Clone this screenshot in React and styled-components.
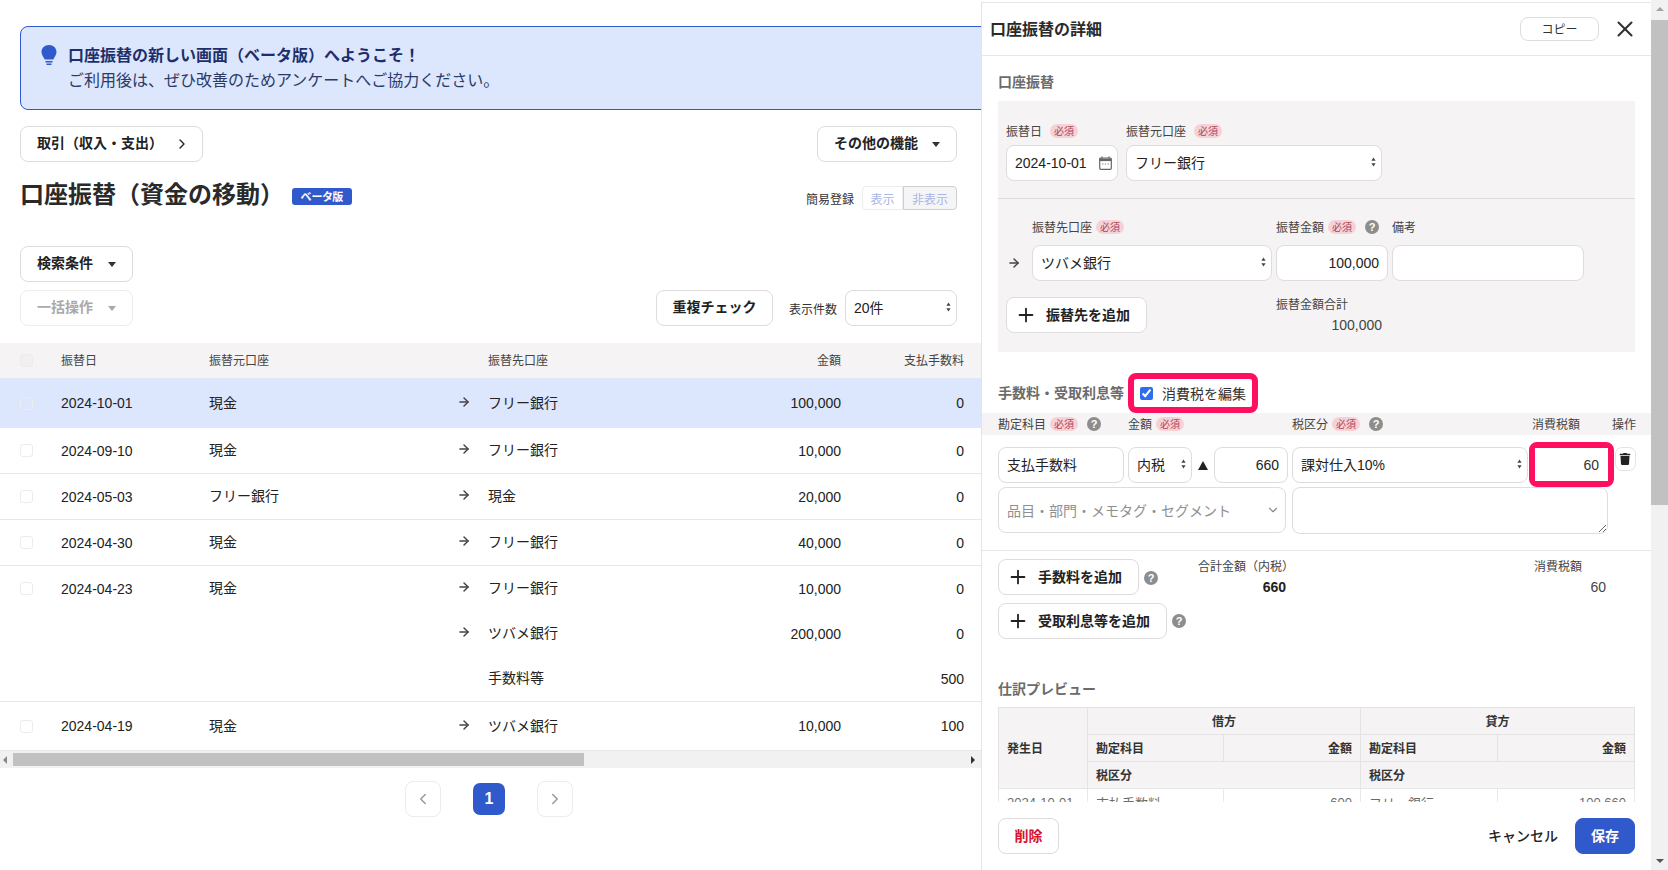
import styled, { createGlobalStyle } from 'styled-components';
import { ArrowRight, ChevronDown, ChevronLeft, ChevronRight, Plus, X } from 'lucide-react';
import { FaTrash } from 'react-icons/fa';

const GlobalStyle = createGlobalStyle`
html, body { margin: 0; padding: 0; background: #fff; }
body {
  font-family: "Liberation Sans", "Noto Sans CJK JP", sans-serif;
  font-size: 14px;
  color: #222;
  overflow: hidden;
}
* { box-sizing: border-box; }
`;

const Page = styled.div`
display: flex;
width: 1668px;
height: 870px;
overflow: hidden;
`;

const Main = styled.main`
width: 981px;
flex: none;
overflow: hidden;
padding-top: 26px;
`;

const Banner = styled.div`
display: flex;
gap: 11px;
width: 1000px;
height: 84px;
margin-left: 20px;
padding: 17px 20px;
background: #dce6fd;
border: 1px solid #3059cc;
border-radius: 8px;
`;

const BannerTitle = styled.div`
font-size: 16px;
line-height: 24px;
font-weight: 700;
color: #1c2f6b;
`;

const BannerText = styled.div`
margin-top: 1px;
font-size: 16px;
line-height: 24px;
color: #2b3a66;
`;

const Bar = styled.div`
display: flex;
align-items: center;
justify-content: space-between;
padding: 0 24px 0 20px;
margin-top: ${p => p.$top || 0}px;
`;

const Button = styled.button`
display: inline-flex;
align-items: center;
justify-content: ${p => p.$start ? 'flex-start' : p.$center ? 'center' : 'space-between'};
gap: 9px;
flex: none;
width: ${p => p.$w}px;
height: 36px;
padding: 0 ${p => p.$pad ?? 16}px ${p => p.$lift ?? 3}px;
font: 700 14px "Liberation Sans", "Noto Sans CJK JP", sans-serif;
white-space: nowrap;
color: ${p => p.$disabled ? '#a9a9a9' : '#222'};
background: #fff;
border: 1px solid ${p => p.$disabled ? '#ececec' : '#dedcdd'};
border-radius: 8px;
svg { margin-top: ${p => p.$lift ?? 3}px; }
`;

const Caret = styled.span`
display: inline-block;
width: 0;
height: 0;
margin-top: 5px;
border-left: 4px solid transparent;
border-right: 4px solid transparent;
border-top: 5px solid ${p => p.$disabled ? '#a9a9a9' : '#333'};
`;

const NextIcon = styled(ChevronRight)`
margin-right: -4px;
`;

const TitleRow = styled(Bar)`
height: 34px;
`;

const TitleGroup = styled.div`
display: flex;
align-items: center;
gap: 8px;
`;

const PageTitle = styled.h1`
margin: 0;
font-size: 24px;
line-height: 34px;
font-weight: 700;
color: #2a2a2a;
`;

const BetaBadge = styled.span`
display: inline-flex;
align-items: center;
justify-content: center;
width: 60px;
height: 17px;
margin-top: 2px;
background: #3059cc;
color: #fff;
font-size: 11px;
font-weight: 700;
border-radius: 3px;
font-feature-settings: "palt";
`;

const ToggleGroup = styled.div`
display: flex;
align-items: center;
margin-top: 6px;
font-size: 12px;
`;

const ToggleLabel = styled.span`
margin-right: 8px;
color: #333;
`;

const ToggleItem = styled.span`
display: flex;
align-items: center;
justify-content: center;
width: ${p => p.$w}px;
height: 24px;
color: #a9b6e4;
background: ${p => p.$on ? '#f5f5f7' : '#fff'};
border: 1px solid ${p => p.$on ? '#cfcfd2' : '#ececec'};
border-radius: ${p => p.$on ? '0 4px 4px 0' : '4px 0 0 4px'};
`;

const ToolGroup = styled.div`
display: flex;
align-items: center;
`;

const SmallLabel = styled.span`
font-size: 12px;
color: #333;
margin: 0 8px 0 16px;
`;

const SelectBox = styled.div`
display: flex;
align-items: center;
justify-content: space-between;
flex: none;
width: ${p => p.$w}px;
height: ${p => p.$h || 36}px;
padding: 0 5px ${p => p.$flat ? 0 : 2}px 8px;
font-size: 14px;
color: ${p => p.$muted ? '#8f8f8f' : '#222'};
background: #fff;
border: 1px solid #dedcdd;
border-radius: 8px;
white-space: nowrap;
`;

const TableWrap = styled.div`
margin-top: 17px;
`;

const Row = styled.div`
display: grid;
grid-template-columns: 61px 148px 248px 31px 200px 153px 123px 17px;
align-items: center;
height: ${p => p.$h}px;
background: ${p => p.$bg || '#fff'};
border-bottom: ${p => p.$line ? '1px solid #e8e7e8' : 'none'};
font-size: ${p => p.$head ? 12 : 14}px;
color: ${p => p.$head ? '#444' : '#222'};
`;

const Check = styled.span`
display: block;
width: 13px;
height: 13px;
margin-left: 20px;
border: 1px solid #ececec;
border-radius: 3px;
background: ${p => p.$head ? '#f1eff0' : 'transparent'};
`;

const JaCell = styled.div`
padding-bottom: 3px;
`;

const Num = styled.div`
text-align: right;
`;

const JaNum = styled(Num)`
padding-bottom: 3px;
`;

const ArrowCell = styled.div`
display: flex;
align-items: center;
padding-bottom: 3px;
color: #444;
`;

const HScroll = styled.div`
display: flex;
align-items: center;
justify-content: space-between;
height: 18px;
padding: 0 6px 0 3px;
background: #f1f1f1;
border-top: 1px solid #e8e8e8;
position: relative;
`;

const HThumb = styled.div`
position: absolute;
left: 13px;
top: 2px;
width: 571px;
height: 13px;
background: #c1c1c1;
`;

const Tri = styled.span`
width: 0;
height: 0;
border-top: 4px solid transparent;
border-bottom: 4px solid transparent;
${p => p.$dir === 'left' ? 'border-right: 4px solid #8a8a8a;' : 'border-left: 4px solid #333;'}
`;

const Pager = styled.div`
display: flex;
justify-content: center;
align-items: center;
gap: 32px;
width: 978px;
margin-top: 13px;
`;

const PageArrow = styled.div`
display: flex;
align-items: center;
justify-content: center;
width: 36px;
height: 36px;
color: #999;
border: 1px solid #ececec;
border-radius: 8px;
`;

const PageNum = styled.div`
display: flex;
align-items: center;
justify-content: center;
width: 32px;
height: 32px;
color: #fff;
font-size: 16px;
font-weight: 700;
background: #3059cc;
border-radius: 7px;
`;

const Panel = styled.aside`
position: relative;
display: flex;
flex-direction: column;
width: 670px;
flex: none;
height: 868px;
margin-top: 2px;
border-top: 1px solid #e6e6e6;
border-left: 1px solid #e4e4e4;
background: #fff;
`;

const PanelHead = styled.header`
display: flex;
align-items: center;
justify-content: space-between;
flex: none;
height: 53px;
padding: 0 13px 0 8px;
border-bottom: 1px solid #e6e6e6;
`;

const PanelTitle = styled.h2`
margin: 0;
padding-bottom: 3px;
font-size: 16px;
font-weight: 700;
color: #2a2a2a;
`;

const HeadActions = styled.div`
display: flex;
align-items: center;
gap: 13px;
`;

const CopyButton = styled.button`
width: 79px;
height: 24px;
padding: 0 0 2px;
font: 400 12px "Liberation Sans", "Noto Sans CJK JP", sans-serif;
color: #333;
background: #fff;
border: 1px solid #dedcdd;
border-radius: 8px;
`;

const PanelBody = styled.div`
flex: 1;
min-height: 0;
overflow: hidden;
padding: 16px 16px 0;
`;

const SectionTitle = styled.div`
font-size: 14px;
line-height: 20px;
font-weight: 700;
color: #6b6b6b;
margin-top: ${p => p.$top || 0}px;
white-space: nowrap;
`;

const GreyBox = styled.div`
margin-top: 9px;
height: 251px;
padding-top: 20px;
background: #f5f3f4;
`;

const FieldRow = styled.div`
display: flex;
align-items: flex-end;
gap: ${p => p.$gap ?? 8}px;
padding-left: 8px;
`;

const Field = styled.div`
display: flex;
flex-direction: column;
gap: ${p => p.$gap ?? 4}px;
flex: none;
width: ${p => p.$w}px;
margin-left: ${p => p.$left || 0}px;
`;

const LabelRow = styled.div`
display: flex;
align-items: center;
gap: ${p => p.$gap ?? 8}px;
height: 20px;
padding-bottom: 1px;
font-size: 12px;
color: #444;
white-space: nowrap;
`;

const Required = styled.span`
display: inline-flex;
align-items: center;
justify-content: center;
width: 28px;
height: 14px;
font-size: 10px;
color: #a8475c;
background: #f7d1d8;
border-radius: 7px;
`;

const Help = styled.span`
display: inline-flex;
align-items: center;
justify-content: center;
align-self: center;
flex: none;
width: 14px;
height: 14px;
margin-left: ${p => p.$left || 0}px;
font-size: 11px;
font-weight: 700;
color: #fff;
background: #8d8d8d;
border-radius: 50%;
`;

const Divider = styled.div`
height: 1px;
margin: 17px 0 18px;
background: #dcdadb;
`;

const TextInput = styled.input`
flex: none;
width: ${p => p.$w ? p.$w + 'px' : '100%'};
height: 36px;
padding: 0 8px ${p => p.$cjk ? 2 : 0}px;
font: 400 14px "Liberation Sans", "Noto Sans CJK JP", sans-serif;
color: #222;
text-align: ${p => p.$right ? 'right' : 'left'};
background: #fff;
border: 1px solid #dedcdd;
border-radius: 8px;
outline: none;
`;

const ArrowBox = styled.div`
display: flex;
align-items: center;
justify-content: center;
flex: none;
width: 16px;
height: 36px;
margin-right: 2px;
color: #444;
`;

const TotalRow = styled.div`
display: flex;
align-items: flex-start;
margin-top: 16px;
padding-left: 8px;
`;

const AddLabel = styled.span`
white-space: nowrap;
`;

const Summary = styled.div`
flex: none;
width: ${p => p.$w}px;
margin-left: ${p => p.$left}px;
font-size: 12px;
line-height: 16px;
white-space: nowrap;
color: #444;
`;

const SummaryValue = styled.div`
margin-top: 2px;
font-size: 14px;
line-height: 20px;
text-align: right;
color: ${p => p.$bold ? '#222' : '#444'};
font-weight: ${p => p.$bold ? 700 : 400};
`;

const FeeTitleRow = styled.div`
display: flex;
align-items: center;
gap: 4px;
height: 40px;
margin-top: 21px;
`;

const CheckFrame = styled.label`
display: flex;
align-items: center;
gap: 9px;
width: 130px;
height: 40px;
padding-left: 6px;
font-size: 14px;
color: #333;
white-space: nowrap;
border: 6px solid #fe0f5f;
border-radius: 8px;
`;

const BlueCheck = styled.input`
width: 13px;
height: 13px;
margin: 0;
accent-color: #2a6ff0;
`;

const ColumnHead = styled.div`
display: grid;
grid-template-columns: 130px 164px 240px 80px auto;
align-items: center;
height: 22px;
margin: 0 -16px;
padding-left: 16px;
background: #f5f3f4;
`;

const FeeRow = styled.div`
display: flex;
align-items: center;
gap: 4px;
margin-top: ${p => p.$top}px;
`;

const TriangleMark = styled.span`
flex: none;
width: 10px;
margin: 0 2px;
height: 0;
border-left: 5px solid transparent;
border-right: 5px solid transparent;
border-bottom: 9px solid #222;
`;

const HighlightFrame = styled.div`
flex: none;
width: 85px;
height: 45px;
margin: -5px -3px -4px -3px;
border: 6px solid #fe0f5f;
border-radius: 8px;
background: #fff;
`;

const BareInput = styled.input`
display: block;
width: 100%;
height: 100%;
padding: 0 9px 0 0;
font: 400 14px "Liberation Sans", "Noto Sans CJK JP", sans-serif;
color: #333;
text-align: right;
border: none;
outline: none;
`;

const TrashButton = styled.div`
display: flex;
align-items: center;
justify-content: center;
align-self: flex-start;
flex: none;
width: 21px;
height: 24px;
padding-right: 2px;
color: #222;
border: 1px solid #e4e4e4;
border-radius: 7px;
`;

const NoteRow = styled.div`
display: flex;
align-items: flex-start;
gap: 6px;
margin-top: 4px;
`;

const NoteArea = styled.textarea`
flex: none;
width: 316px;
height: 47px;
padding: 6px 8px;
background: #fff;
border: 1px solid #dedcdd;
border-radius: 8px;
outline: none;
`;

const FullLine = styled.div`
height: 1px;
margin: 16px -16px 8px;
background: #e6e6e6;
`;

const AddRow = styled.div`
display: flex;
align-items: flex-start;
margin-top: ${p => p.$top || 0}px;
`;

const Journal = styled.table`
width: 636px;
margin-top: 8px;
border-collapse: collapse;
table-layout: fixed;
font-size: 12px;
`;

const Th = styled.th`
height: 27px;
padding: 0 8px 2px;
font-weight: 700;
color: #333;
text-align: ${p => p.$align || 'left'};
background: #f5f3f4;
border: 1px solid #e4e2e3;
`;

const Td = styled.td`
height: 27px;
padding: 0 8px;
font-size: 13px;
color: #333;
text-align: ${p => p.$align || 'left'};
border: 1px solid #e4e2e3;
`;

const PanelFoot = styled.footer`
position: relative;
display: flex;
align-items: center;
justify-content: space-between;
flex: none;
height: 68px;
padding: 0 16px;
background: #fff;
&::before {
  content: '';
  position: absolute;
  left: 0;
  right: 0;
  bottom: 100%;
  height: 24px;
  background: linear-gradient(rgba(255, 255, 255, 0), rgba(255, 255, 255, 0.3));
}
`;

const DeleteButton = styled(Button)`
color: #d6112f;
`;

const FootActions = styled.div`
display: flex;
align-items: center;
gap: 17px;
`;

const CancelText = styled.span`
padding-bottom: 3px;
font-size: 14px;
font-weight: 500;
color: #222;
`;

const SaveButton = styled(Button)`
color: #fff;
background: #3059cc;
border-color: #3059cc;
`;

const VScroll = styled.div`
display: flex;
flex-direction: column;
align-items: center;
flex: none;
width: 17px;
height: 870px;
background: #f1f1f1;
`;

const VThumb = styled.div`
width: 100%;
height: 485px;
margin-top: 9px;
background: #c1c1c1;
`;

const UpTri = styled.span`
width: 0;
height: 0;
margin-top: 7px;
border-left: 4px solid transparent;
border-right: 4px solid transparent;
border-bottom: 4px solid #a3a3a3;
`;

const DownTri = styled.span`
width: 0;
height: 0;
margin-top: auto;
margin-bottom: 7px;
border-left: 4px solid transparent;
border-right: 4px solid transparent;
border-top: 4px solid #555;
`;

const UpDown = () => (
  <svg width="5" height="10" viewBox="0 0 5 10" style={{ flex: 'none' }}>
    <path d="M2.5 0.5L4.6 3.8H0.4Z M2.5 9.5L0.4 6.2H4.6Z" fill="#444" />
  </svg>
);

const Calendar = () => (
  <svg width="13" height="14" viewBox="0 0 13 14" style={{ flex: 'none' }}>
    <rect x="0.7" y="2" width="11.6" height="11.3" rx="1" fill="none" stroke="#666" strokeWidth="1.2" />
    <path d="M0.7 2.5h11.6v2.6H0.7Z" fill="#666" />
    <path d="M3 0.5v2M10 0.5v2" stroke="#666" strokeWidth="1.2" />
    <path d="M3 8h1.4M5.8 8h1.4M8.6 8h1.4" stroke="#888" strokeWidth="1.2" />
  </svg>
);

const Bulb = () => (
  <svg width="16" height="20" viewBox="0 0 16 20" style={{ flex: 'none', marginTop: 1 }}>
    <path d="M8 0C3.6 0 0.5 3 0.5 6.9c0 3.1 2.2 4.7 3.2 7.6h8.6c1-2.9 3.2-4.5 3.2-7.6C15.5 3 12.4 0 8 0Z" fill="#3059cc" />
    <path d="M4.5 16h7v1.6h-7ZM5.5 18.4h5V20h-5Z" fill="#3059cc" />
  </svg>
);

const rows = [
  { h: 50, bg: '#dce6fd', date: '2024-10-01', from: '現金', to: 'フリー銀行', amount: '100,000', fee: '0' },
  { h: 46, line: true, date: '2024-09-10', from: '現金', to: 'フリー銀行', amount: '10,000', fee: '0' },
  { h: 46, line: true, date: '2024-05-03', from: 'フリー銀行', to: '現金', amount: '20,000', fee: '0' },
  { h: 46, line: true, date: '2024-04-30', from: '現金', to: 'フリー銀行', amount: '40,000', fee: '0' },
  { h: 45, date: '2024-04-23', from: '現金', to: 'フリー銀行', amount: '10,000', fee: '0' },
  { h: 45, sub: true, to: 'ツバメ銀行', amount: '200,000', fee: '0' },
  { h: 46, line: true, sub: true, noArrow: true, to: '手数料等', fee: '500' },
  { h: 48, date: '2024-04-19', from: '現金', to: 'ツバメ銀行', amount: '10,000', fee: '100' },
];

export default function App() {
  return (
    <Page>
      <GlobalStyle />
      <Main>
        <Banner>
          <Bulb />
          <div>
            <BannerTitle>口座振替の新しい画面（ベータ版）へようこそ！</BannerTitle>
            <BannerText>ご利用後は、ぜひ改善のためアンケートへご協力ください。</BannerText>
          </div>
        </Banner>

        <Bar $top={16}>
          <Button $w={183} $lift={5}>取引（収入・支出）<NextIcon size={16} strokeWidth={2} /></Button>
          <Button $w={140} $lift={5}>その他の機能<Caret /></Button>
        </Bar>

        <TitleRow $top={16}>
          <TitleGroup>
            <PageTitle>口座振替（資金の移動）</PageTitle>
            <BetaBadge>ベータ版</BetaBadge>
          </TitleGroup>
          <ToggleGroup>
            <ToggleLabel>簡易登録</ToggleLabel>
            <ToggleItem $w={41}>表示</ToggleItem>
            <ToggleItem $w={54} $on>非表示</ToggleItem>
          </ToggleGroup>
        </TitleRow>

        <Bar $top={34}>
          <Button $w={113} $lift={5}>検索条件<Caret /></Button>
        </Bar>
        <Bar $top={8}>
          <Button $w={113} $lift={5} $disabled>一括操作<Caret $disabled /></Button>
          <ToolGroup>
            <Button $w={117} $center $lift={5}>重複チェック</Button>
            <SmallLabel>表示件数</SmallLabel>
            <SelectBox $w={112}>20件<UpDown /></SelectBox>
          </ToolGroup>
        </Bar>

        <TableWrap>
          <Row $h={35} $head $bg="#f5f3f4">
            <Check $head />
            <JaCell>振替日</JaCell>
            <JaCell>振替元口座</JaCell>
            <div />
            <JaCell>振替先口座</JaCell>
            <JaNum>金額</JaNum>
            <JaNum>支払手数料</JaNum>
          </Row>
          {rows.map((r, i) => (
            <Row key={i} $h={r.h} $bg={r.bg} $line={r.line}>
              {r.sub ? <div /> : <Check />}
              <div>{r.date}</div>
              <JaCell>{r.from}</JaCell>
              <ArrowCell>{!r.noArrow && <ArrowRight size={14} strokeWidth={2.5} />}</ArrowCell>
              <JaCell>{r.to}</JaCell>
              <Num>{r.amount}</Num>
              <Num>{r.fee}</Num>
            </Row>
          ))}
          <HScroll>
            <Tri $dir="left" />
            <HThumb />
            <Tri $dir="right" />
          </HScroll>
        </TableWrap>

        <Pager>
          <PageArrow><ChevronLeft size={18} /></PageArrow>
          <PageNum>1</PageNum>
          <PageArrow><ChevronRight size={18} /></PageArrow>
        </Pager>
      </Main>

      <Panel>
        <PanelHead>
          <PanelTitle>口座振替の詳細</PanelTitle>
          <HeadActions>
            <CopyButton>コピー</CopyButton>
            <X size={26} strokeWidth={1.9} color="#333" />
          </HeadActions>
        </PanelHead>

        <PanelBody>
          <SectionTitle>口座振替</SectionTitle>
          <GreyBox>
            <FieldRow>
              <Field $w={112}>
                <LabelRow>振替日<Required>必須</Required></LabelRow>
                <SelectBox $w={112} $flat>2024-10-01<Calendar /></SelectBox>
              </Field>
              <Field $w={256}>
                <LabelRow>振替元口座<Required>必須</Required></LabelRow>
                <SelectBox $w={256}>フリー銀行<UpDown /></SelectBox>
              </Field>
            </FieldRow>
            <Divider />
            <FieldRow $gap={4}>
              <ArrowBox><ArrowRight size={14} strokeWidth={2.5} /></ArrowBox>
              <Field $w={240} $gap={8} $left={4}>
                <LabelRow $gap={4}>振替先口座<Required>必須</Required></LabelRow>
                <SelectBox $w={240}>ツバメ銀行<UpDown /></SelectBox>
              </Field>
              <Field $w={112} $gap={8}>
                <LabelRow $gap={4}>振替金額<Required>必須</Required><Help $left={5}>?</Help></LabelRow>
                <TextInput $right readOnly value="100,000" />
              </Field>
              <Field $w={192} $gap={8}>
                <LabelRow>備考</LabelRow>
                <TextInput readOnly value="" />
              </Field>
            </FieldRow>
            <TotalRow>
              <Button $w={141} $start $pad={8}><Plus size={22} strokeWidth={2} /><AddLabel>振替先を追加</AddLabel></Button>
              <Summary $w={106} $left={129}>
                振替金額合計
                <SummaryValue>100,000</SummaryValue>
              </Summary>
            </TotalRow>
          </GreyBox>

          <FeeTitleRow>
            <SectionTitle>手数料・受取利息等</SectionTitle>
            <CheckFrame><BlueCheck type="checkbox" defaultChecked />消費税を編集</CheckFrame>
          </FeeTitleRow>
          <ColumnHead>
            <LabelRow $gap={4}>勘定科目<Required>必須</Required><Help $left={5}>?</Help></LabelRow>
            <LabelRow $gap={4}>金額<Required>必須</Required></LabelRow>
            <LabelRow $gap={4}>税区分<Required>必須</Required><Help $left={5}>?</Help></LabelRow>
            <LabelRow>消費税額</LabelRow>
            <LabelRow>操作</LabelRow>
          </ColumnHead>

          <FeeRow $top={12}>
            <TextInput $w={126} $cjk readOnly value="支払手数料" />
            <SelectBox $w={64}>内税<UpDown /></SelectBox>
            <TriangleMark />
            <TextInput $w={74} $right readOnly value="660" />
            <SelectBox $w={236}>課対仕入10%<UpDown /></SelectBox>
            <HighlightFrame><BareInput readOnly value="60" /></HighlightFrame>
            <TrashButton><FaTrash size={12} /></TrashButton>
          </FeeRow>
          <NoteRow>
            <SelectBox $w={288} $h={46} $muted $flat>
              品目・部門・メモタグ・セグメント
              <ChevronDown size={14} color="#888" />
            </SelectBox>
            <NoteArea readOnly />
          </NoteRow>
          <FullLine />

          <AddRow>
            <Button $w={141} $start $pad={8}><Plus size={22} strokeWidth={2} /><AddLabel>手数料を追加</AddLabel></Button>
            <Help $left={5}>?</Help>
            <Summary $w={88} $left={40}>
              合計金額（内税）
              <SummaryValue $bold>660</SummaryValue>
            </Summary>
            <Summary $w={72} $left={248}>
              消費税額
              <SummaryValue>60</SummaryValue>
            </Summary>
          </AddRow>
          <AddRow $top={6}>
            <Button $w={169} $start $pad={8}><Plus size={22} strokeWidth={2} /><AddLabel>受取利息等を追加</AddLabel></Button>
            <Help $left={5}>?</Help>
          </AddRow>

          <SectionTitle $top={40}>仕訳プレビュー</SectionTitle>
          <Journal>
            <colgroup>
              <col width="89" />
              <col width="136" />
              <col width="137" />
              <col width="137" />
              <col width="137" />
            </colgroup>
            <thead>
              <tr>
                <Th rowSpan={3}>発生日</Th>
                <Th colSpan={2} $align="center">借方</Th>
                <Th colSpan={2} $align="center">貸方</Th>
              </tr>
              <tr>
                <Th>勘定科目</Th>
                <Th $align="right">金額</Th>
                <Th>勘定科目</Th>
                <Th $align="right">金額</Th>
              </tr>
              <tr>
                <Th colSpan={2}>税区分</Th>
                <Th colSpan={2}>税区分</Th>
              </tr>
            </thead>
            <tbody>
              <tr>
                <Td>2024-10-01</Td>
                <Td>支払手数料</Td>
                <Td $align="right">600</Td>
                <Td>フリー銀行</Td>
                <Td $align="right">100,660</Td>
              </tr>
            </tbody>
          </Journal>
        </PanelBody>

        <PanelFoot>
          <DeleteButton $w={61} $center $pad={0}>削除</DeleteButton>
          <FootActions>
            <CancelText>キャンセル</CancelText>
            <SaveButton $w={60} $center $pad={0}>保存</SaveButton>
          </FootActions>
        </PanelFoot>
      </Panel>

      <VScroll>
        <UpTri />
        <VThumb />
        <DownTri />
      </VScroll>
    </Page>
  );
}
